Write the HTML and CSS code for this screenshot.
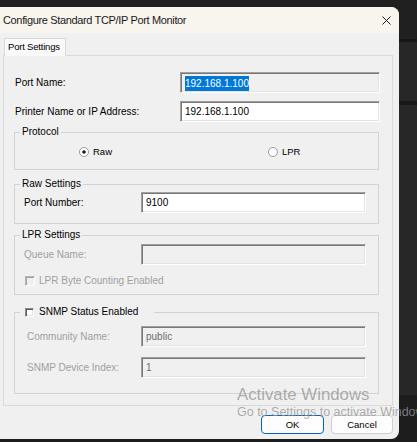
FILE: index.html
```html
<!DOCTYPE html>
<html>
<head>
<meta charset="utf-8">
<title>Configure Standard TCP/IP Port Monitor</title>
<link rel="stylesheet" href="styles.css">
</head>
<body>
<div class="screen">
  <div class="dialog">
    <div class="titlebar">
      <span class="title">Configure Standard TCP/IP Port Monitor</span>
      <svg class="close" width="9" height="9" viewBox="0 0 9 9"><path d="M0.5 0.5L8.5 8.5M8.5 0.5L0.5 8.5" stroke="#1a1a1a" stroke-width="1"/></svg>
    </div>
    <div class="tabs"><div class="tab">Port Settings</div></div>
    <div class="panel">
      <div class="form-top">
        <span class="label">Port Name:</span>
        <div class="input ro"><span class="sel">192.168.1.100</span></div>
        <span class="label">Printer Name or IP Address:</span>
        <div class="input">192.168.1.100</div>
      </div>

      <fieldset class="group protocol">
        <legend>Protocol</legend>
        <div class="radios">
          <span class="radio"><svg width="12" height="12" viewBox="0 0 12 12"><circle cx="6" cy="6" r="4.5" fill="#fff" stroke="#9a9a9a"/><circle cx="6" cy="6" r="1.8" fill="#1a1a1a"/></svg>Raw</span>
          <span class="radio"><svg width="12" height="12" viewBox="0 0 12 12"><circle cx="6" cy="6" r="4.5" fill="#fff" stroke="#9a9a9a"/></svg>LPR</span>
        </div>
      </fieldset>

      <fieldset class="group raw">
        <legend>Raw Settings</legend>
        <div class="rows">
          <span class="label">Port Number:</span>
          <div class="input">9100</div>
        </div>
      </fieldset>

      <fieldset class="group lpr">
        <legend>LPR Settings</legend>
        <div class="rows">
          <span class="label dis">Queue Name:</span>
          <div class="input ro"></div>
        </div>
        <div class="check-row dis"><span class="check ro"></span>LPR Byte Counting Enabled</div>
      </fieldset>

      <fieldset class="group snmp">
        <legend><span class="check"></span>SNMP Status Enabled</legend>
        <div class="rows">
          <span class="label dis">Community Name:</span>
          <div class="input ro txt-dis">public</div>
          <span class="label dis">SNMP Device Index:</span>
          <div class="input ro txt-dis">1</div>
        </div>
      </fieldset>
    </div>
    <div class="buttons">
      <button class="btn default">OK</button>
      <button class="btn">Cancel</button>
    </div>
  </div>
  <div class="watermark">
    <div class="wm1">Activate Windows</div>
    <div class="wm2">Go to Settings to activate Windows.</div>
  </div>
</div>
</body>
</html>
```
FILE: styles.css
```css
html, body {
  margin: 0;
  padding: 0;
  background: #1c1c1c;
}
.screen {
  width: 417px;
  height: 442px;
  position: relative;
  overflow: hidden;
  box-sizing: border-box;
  padding-top: 7px;
  font-family: "Liberation Sans", Arial, sans-serif;
  color: #000;
  background: linear-gradient(to bottom,
    #202020 0 39px, #171717 39px 42px, #272727 42px 101px,
    #181818 101px 105px, #272727 105px 395px, #1d1d1d 395px 442px);
}
.dialog {
  width: 399px;
  height: 432px;
  background: #f0f0f0;
  border-radius: 0 8px 8px 0;
  overflow: hidden;
  display: flex;
  flex-direction: column;
}
.titlebar {
  height: 26px;
  flex: none;
  background: #f8f4ee;
  display: flex;
  align-items: center;
  justify-content: space-between;
  padding: 0 8px 0 3px;
}
.title {
  font-size: 11px;
  letter-spacing: -0.35px;
  color: #1a1a1a;
}
.close { display: block; }

.tabs {
  padding: 5px 0 0 4px;
  display: flex;
}
.tab {
  position: relative;
  z-index: 1;
  width: 62px;
  height: 18px;
  box-sizing: border-box;
  border: 1px solid #d9d9d9;
  border-bottom: none;
  background: #f9f9f9;
  font-size: 9.5px;
  letter-spacing: -0.2px;
  line-height: 16px;
  padding-left: 3px;
  margin-bottom: -1px;
}
.panel {
  margin-left: 3px;
  width: 390px;
  box-sizing: border-box;
  border: 1px solid #dadada;
  padding: 16px 0 11px 10px;
}
.label {
  font-size: 10px;
  line-height: 12px;
}
.form-top {
  display: grid;
  grid-template-columns: 165px 200px;
  row-gap: 8px;
  align-items: center;
  padding-left: 1px;
}
.input {
  height: 21px;
  box-sizing: border-box;
  border: 1px solid;
  border-color: #a0a0a0 #ffffff #ffffff #a0a0a0;
  box-shadow: inset 1px 1px 0 #787878, inset -1px -1px 0 #e3e3e3;
  background: #fff;
  font-size: 10px;
  line-height: 19px;
  padding-left: 4px;
  white-space: nowrap;
}
.input.ro { background: #f0f0f0; }
.sel {
  display: inline-block;
  background: #0078d7;
  color: #fff;
  line-height: 15px;
  vertical-align: middle;
}
.txt-dis { color: #6d6d6d; }

.group {
  margin: 0;
  width: 365px;
  box-sizing: border-box;
  border: 1px solid #d3d3d3;
  padding: 0 0 0 9px;
  min-inline-size: 0;
}
.group legend {
  margin-left: -4px;
  padding: 0 2px;
  font-size: 10px;
  line-height: 12px;
}
.protocol { margin-top: 4px; }
.radios {
  display: grid;
  grid-template-columns: 189px auto;
  padding: 8px 0 11px 54px;
}
.radio {
  display: flex;
  align-items: center;
  gap: 3px;
  font-size: 9.5px;
  line-height: 12px;
}
.radio svg { display: block; }

.rows {
  display: grid;
  grid-template-columns: 117px 225px;
  align-items: center;
  row-gap: 10px;
}
.raw { margin-top: 8px; }
.raw .rows { padding: 2px 0 10px; }
.lpr { margin-top: 5px; }
.lpr .rows { padding-top: 3px; }
.dis { color: #a0a0a0; }
.check-row {
  display: flex;
  align-items: center;
  gap: 4px;
  margin: 10px 0 7px 1px;
  font-size: 10px;
  line-height: 12px;
}
.check {
  display: block;
  width: 10px;
  height: 10px;
  box-sizing: border-box;
  border: 1px solid;
  border-color: #8a8a8a #ffffff #ffffff #8a8a8a;
  box-shadow: inset 1px 1px 0 #5a5a5a, inset -1px -1px 0 #e3e3e3;
  background: #fff;
}
.check.ro { background: #f0f0f0; border-color: #b5b5b5 #fff #fff #b5b5b5; box-shadow: inset 1px 1px 0 #a0a0a0; }
.snmp { margin-top: 11px; }
.snmp legend {
  display: flex;
  align-items: center;
  gap: 5px;
  padding: 0 16px 0 5px;
}
.snmp legend .check { width: 9px; height: 9px; }
.snmp .rows { padding: 8px 0 15px; }
.snmp .label { padding-left: 3px; }

.buttons {
  display: flex;
  justify-content: flex-end;
  gap: 7px;
  padding: 9px 6px 0 0;
}
.btn {
  height: 19px;
  width: 62px;
  box-sizing: border-box;
  border: 1px solid #d0d0d0;
  border-radius: 4px;
  background: #fdfdfd;
  font-family: "Liberation Sans", Arial, sans-serif;
  font-size: 9.5px;
  color: #000;
  padding: 0;
}
.btn.default {
  width: 63px;
  border-color: #0067c0;
}
.watermark {
  position: absolute;
  left: 237px;
  top: 385px;
  color: rgba(150, 150, 150, 0.78);
  white-space: nowrap;
  pointer-events: none;
}
.wm1 { font-size: 16.8px; line-height: 19px; }
.wm2 { font-size: 12.5px; line-height: 15px; margin-top: 1px; }
```
